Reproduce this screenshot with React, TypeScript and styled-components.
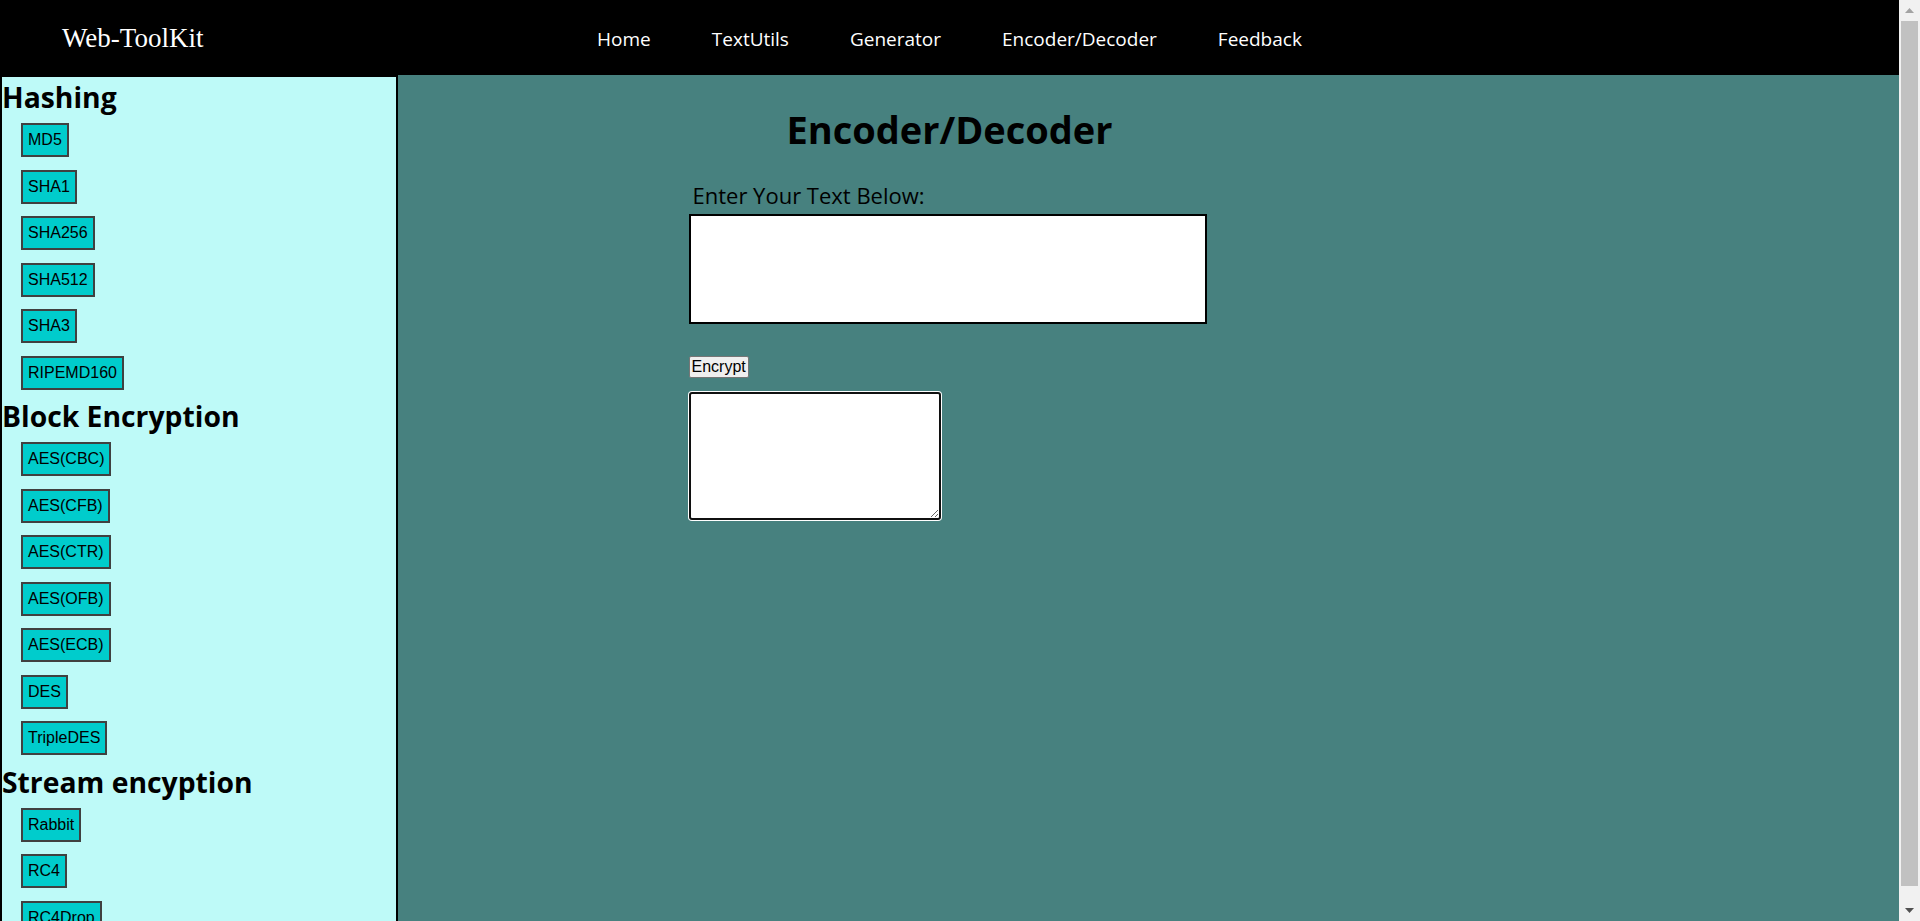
import React from "react";
import styled, { createGlobalStyle } from "styled-components";

const GlobalStyle = createGlobalStyle`
  html, body {
    margin: 0;
    padding: 0;
    height: 100%;
    overflow: hidden;
  }
  body {
    font-family: "Open Sans", "Noto Sans", sans-serif;
    background: #47817f;
    color: #000;
  }
  * { box-sizing: border-box; }
`;

const Window = styled.div`
  display: flex;
  height: 100vh;
`;

const Page = styled.div`
  flex: 1;
  min-width: 0;
  height: 100%;
  overflow: hidden;
  background: #47817f;
`;

const Scrollbar = styled.div`
  width: 21px;
  flex: none;
  background: #f1f1f1;
  display: flex;
  flex-direction: column;
  align-items: center;
`;

const ScrollArrow = styled.div`
  height: 21px;
  width: 100%;
  display: flex;
  align-items: center;
  justify-content: center;
`;

const ScrollThumb = styled.div`
  flex: 1;
  width: 17px;
  background: #c1c1c1;
  margin-bottom: 14px;
`;

const Header = styled.header`
  height: 75px;
  background: #000;
  display: grid;
  grid-template-columns: 1fr auto 1fr;
  align-items: center;
`;

const Logo = styled.div`
  font-family: "Liberation Serif", "Times New Roman", serif;
  font-size: 27px;
  color: #fff;
  padding-left: 62px;
  padding-top: 1px;
`;

const Nav = styled.nav`
  display: flex;
  gap: 61px;
  padding-top: 2px;
`;

const NavLink = styled.a`
  color: #fff;
  font-size: 19px;
  text-decoration: none;
  cursor: pointer;
`;

const Body = styled.div`
  display: grid;
  grid-template-columns: 398px 1fr 398px;
  align-items: start;
`;

const Sidebar = styled.aside`
  background: #befaf8;
  border: 2px solid #000;
  display: flex;
  flex-direction: column;
`;

const SectionTitle = styled.h2`
  margin: 0;
  font-size: 28.3px;
  font-weight: 700;
  line-height: 40px;
`;

const ToolList = styled.div`
  display: flex;
  flex-direction: column;
  align-items: flex-start;
  gap: 12.5px;
  padding: 6px 0 6.5px 19px;
`;

const ToolButton = styled.button`
  font-family: "Liberation Sans", Arial, sans-serif;
  font-size: 16px;
  line-height: 18px;
  height: 34px;
  color: #000;
  background: #00cccc;
  border: 2px solid #404040;
  padding: 6px 5px;
  margin: 0;
  cursor: pointer;
`;

const Main = styled.main`
  display: flex;
  flex-direction: column;
  align-items: center;
  padding-top: 30px;
`;

const Panel = styled.section`
  width: 522px;
  display: flex;
  flex-direction: column;
  align-items: flex-start;
`;

const Title = styled.h1`
  align-self: stretch;
  margin: 0;
  text-align: center;
  font-size: 38px;
  font-weight: 700;
  line-height: 48px;
`;

const Label = styled.label`
  font-size: 22px;
  line-height: 30px;
  margin: 27px 0 4px 4px;
`;

const InputArea = styled.textarea`
  width: 518px;
  height: 110px;
  border: 2px solid #000;
  background: #fff;
  resize: none;
  margin: 0;
`;

const EncryptButton = styled.button`
  margin-top: 31.5px;
  font-family: "Liberation Sans", Arial, sans-serif;
  font-size: 16px;
  line-height: 18.5px;
  color: #000;
  background: #efefef;
  border: 1px solid #767676;
  border-radius: 2px;
  padding: 1px 2px;
  cursor: pointer;
`;

const OutputArea = styled.textarea`
  margin-top: 14px;
  width: 252px;
  height: 128px;
  border: 2px solid #101010;
  border-radius: 3px;
  box-shadow: 0 0 0 1px #fff;
  background: #fff;
  outline: none;
`;

const sections: { title: string; items: string[] }[] = [
  { title: "Hashing", items: ["MD5", "SHA1", "SHA256", "SHA512", "SHA3", "RIPEMD160"] },
  {
    title: "Block Encryption",
    items: ["AES(CBC)", "AES(CFB)", "AES(CTR)", "AES(OFB)", "AES(ECB)", "DES", "TripleDES"],
  },
  { title: "Stream encyption", items: ["Rabbit", "RC4", "RC4Drop"] },
];

const links = ["Home", "TextUtils", "Generator", "Encoder/Decoder", "Feedback"];

function Arrow({ up, color }: { up?: boolean; color: string }) {
  return (
    <svg width="9" height="5" viewBox="0 0 9 5">
      <polygon points={up ? "0,5 4.5,0 9,5" : "0,0 9,0 4.5,5"} fill={color} />
    </svg>
  );
}

export default function App() {
  return (
    <>
      <GlobalStyle />
      <Window>
        <Page>
          <Header>
            <Logo>Web-ToolKit</Logo>
            <Nav>
              {links.map((l) => (
                <NavLink key={l}>{l}</NavLink>
              ))}
            </Nav>
            <div />
          </Header>
          <Body>
            <Sidebar>
              {sections.map((s) => (
                <React.Fragment key={s.title}>
                  <SectionTitle>{s.title}</SectionTitle>
                  <ToolList>
                    {s.items.map((i) => (
                      <ToolButton key={i}>{i}</ToolButton>
                    ))}
                  </ToolList>
                </React.Fragment>
              ))}
            </Sidebar>
            <Main>
              <Panel>
                <Title>Encoder/Decoder</Title>
                <Label htmlFor="input-text">Enter Your Text Below:</Label>
                <InputArea id="input-text" />
                <EncryptButton>Encrypt</EncryptButton>
                <OutputArea />
              </Panel>
            </Main>
            <div />
          </Body>
        </Page>
        <Scrollbar aria-hidden>
          <ScrollArrow>
            <Arrow up color="#a3a3a3" />
          </ScrollArrow>
          <ScrollThumb />
          <ScrollArrow>
            <Arrow color="#505050" />
          </ScrollArrow>
        </Scrollbar>
      </Window>
    </>
  );
}
